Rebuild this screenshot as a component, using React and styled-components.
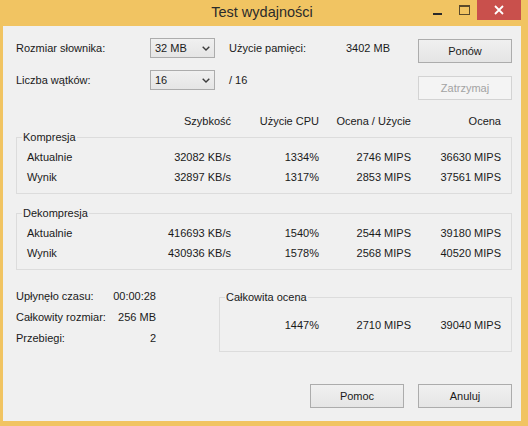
import React from 'react';
import styled, { createGlobalStyle } from 'styled-components';

const Global = createGlobalStyle`
  html, body {
    margin: 0;
    padding: 0;
    background: #f1c462;
  }
  body {
    font-family: "Liberation Sans", Arial, sans-serif;
    font-size: 11px;
    color: #1a1a1a;
  }
`;

const Window = styled.div`
  width: 528px;
  height: 426px;
  box-sizing: border-box;
  padding: 0 7px 5px 3px;
  background: #f1c462;
  display: flex;
  flex-direction: column;
`;

const TitleBar = styled.div`
  height: 26px;
  display: grid;
  grid-template-columns: 1fr auto 1fr;
  align-items: start;
`;

const Title = styled.div`
  grid-column: 2;
  font-size: 14.5px;
  line-height: 24px;
  color: #2b2b2b;
`;

const Controls = styled.div`
  grid-column: 3;
  justify-self: end;
  display: flex;
`;

const CtrlButton = styled.div`
  width: ${p => (p.close ? '44px' : '26px')};
  height: 20px;
  background: ${p => (p.close ? '#c9504c' : 'transparent')};
  display: flex;
  align-items: center;
  justify-content: center;
`;

const Client = styled.div`
  flex: 1;
  background: #f0f0f0;
  padding: 12px 9px 13px 13px;
  display: flex;
  flex-direction: column;
`;

const TopSection = styled.div`
  display: flex;
  justify-content: space-between;
  align-items: flex-start;
`;

const SettingsGrid = styled.div`
  display: grid;
  grid-template-columns: 134px 65px 175px;
  grid-auto-rows: 20px;
  row-gap: 12px;
  align-items: center;
`;

const Side = styled.div`
  padding-left: 14px;
  display: flex;
  justify-content: space-between;
`;

const Combo = styled.div`
  height: 20px;
  box-sizing: border-box;
  border: 1px solid #acacac;
  background: linear-gradient(#f0f0f0, #e5e5e5);
  padding: 0 4px 0 4px;
  display: flex;
  align-items: center;
  justify-content: space-between;
`;

const ButtonColumn = styled.div`
  margin-top: 1px;
  display: flex;
  flex-direction: column;
  gap: 13px;
`;

const Button = styled.div`
  width: 94px;
  height: 24px;
  box-sizing: border-box;
  border: 1px solid ${p => (p.disabled ? '#d3d3d3' : '#acacac')};
  background: ${p => (p.disabled ? '#f4f4f4' : 'linear-gradient(#f0f0f0, #e5e5e5)')};
  color: ${p => (p.disabled ? '#a3a3a3' : '#1a1a1a')};
  display: flex;
  align-items: center;
  justify-content: center;
`;

const DataGrid = styled.div`
  display: grid;
  grid-template-columns: ${p => (p.total ? '1fr 88px 92px 90px' : '1fr 96px 88px 92px 90px')};
  grid-auto-rows: ${p => p.rowH || 20}px;
  align-items: center;
  padding: ${p => p.pad || '0'};
  margin-top: ${p => p.top || 0}px;
`;

const Cell = styled.div`
  text-align: ${p => (p.left ? 'left' : 'right')};
  white-space: nowrap;
`;

const Group = styled.fieldset`
  margin: ${p => p.top || 0}px 0 0 0;
  padding: 0 10px ${p => p.bottom || 6}px 10px;
  border: 1px solid #dcdcdc;
  min-width: 0;
`;

const Legend = styled.legend`
  margin-left: -5px;
  padding: 0 1px;
  line-height: 14px;
  font-size: 11px;
`;

const BottomSection = styled.div`
  margin-top: 15px;
  display: grid;
  grid-template-columns: 140px 1fr;
  column-gap: 63px;
  align-items: start;
`;

const Stats = styled.div`
  display: grid;
  grid-template-columns: 1fr auto;
  grid-auto-rows: 21px;
  align-items: center;
`;

const Footer = styled.div`
  margin-top: auto;
  display: flex;
  justify-content: flex-end;
  gap: 14px;
`;

const Chevron = () => (
  <svg width="8" height="5" viewBox="0 0 8 5">
    <path d="M0.7 0.7 L4 4 L7.3 0.7" fill="none" stroke="#3c3c3c" strokeWidth="1.4" />
  </svg>
);

const columns = ['Szybkość', 'Użycie CPU', 'Ocena / Użycie', 'Ocena'];

const compression = [
  ['Aktualnie', '32082 KB/s', '1334%', '2746 MIPS', '36630 MIPS'],
  ['Wynik', '32897 KB/s', '1317%', '2853 MIPS', '37561 MIPS'],
];

const decompression = [
  ['Aktualnie', '416693 KB/s', '1540%', '2544 MIPS', '39180 MIPS'],
  ['Wynik', '430936 KB/s', '1578%', '2568 MIPS', '40520 MIPS'],
];

const stats = [
  ['Upłynęło czasu:', '00:00:28'],
  ['Całkowity rozmiar:', '256 MB'],
  ['Przebiegi:', '2'],
];

function Rows({ rows }) {
  return rows.map(r =>
    r.map((v, i) => (
      <Cell key={r[0] + i} left={i === 0}>
        {v}
      </Cell>
    ))
  );
}

export default function App() {
  return (
    <Window>
      <Global />
      <TitleBar>
        <Title>Test wydajności</Title>
        <Controls>
          <CtrlButton>
            <svg width="10" height="10" viewBox="0 0 10 10">
              <rect x="0" y="8" width="9" height="2" fill="#2a2a2a" />
            </svg>
          </CtrlButton>
          <CtrlButton>
            <svg width="11" height="10" viewBox="0 0 11 10">
              <rect x="0.5" y="0.5" width="10" height="9" fill="none" stroke="#5a4a2a" />
              <rect x="0.5" y="0.5" width="10" height="1.5" fill="#5a4a2a" />
            </svg>
          </CtrlButton>
          <CtrlButton close>
            <svg width="10" height="10" viewBox="0 0 10 10">
              <path d="M1 1 L9 9 M9 1 L1 9" stroke="#fff" strokeWidth="1.8" />
            </svg>
          </CtrlButton>
        </Controls>
      </TitleBar>

      <Client>
        <TopSection>
          <SettingsGrid>
            <div>Rozmiar słownika:</div>
            <Combo>
              <span>32 MB</span>
              <Chevron />
            </Combo>
            <Side>
              <span>Użycie pamięci:</span>
              <span>3402 MB</span>
            </Side>
            <div>Liczba wątków:</div>
            <Combo>
              <span>16</span>
              <Chevron />
            </Combo>
            <Side>
              <span>/ 16</span>
            </Side>
          </SettingsGrid>
          <ButtonColumn>
            <Button>Ponów</Button>
            <Button disabled>Zatrzymaj</Button>
          </ButtonColumn>
        </TopSection>

        <DataGrid rowH={16} top={13} pad="0 11px">
          <Cell />
          {columns.map(c => (
            <Cell key={c}>{c}</Cell>
          ))}
        </DataGrid>

        <Group top={1}>
          <Legend>Kompresja</Legend>
          <DataGrid top={3}>
            <Rows rows={compression} />
          </DataGrid>
        </Group>

        <Group top={12}>
          <Legend>Dekompresja</Legend>
          <DataGrid top={3}>
            <Rows rows={decompression} />
          </DataGrid>
        </Group>

        <BottomSection>
          <Stats>
            {stats.map(([k, v]) => (
              <React.Fragment key={k}>
                <Cell left>{k}</Cell>
                <Cell>{v}</Cell>
              </React.Fragment>
            ))}
          </Stats>
          <Group top={5} bottom={16}>
            <Legend>Całkowita ocena</Legend>
            <DataGrid total top={11}>
              <Cell />
              <Cell>1447%</Cell>
              <Cell>2710 MIPS</Cell>
              <Cell>39040 MIPS</Cell>
            </DataGrid>
          </Group>
        </BottomSection>

        <Footer>
          <Button>Pomoc</Button>
          <Button>Anuluj</Button>
        </Footer>
      </Client>
    </Window>
  );
}
